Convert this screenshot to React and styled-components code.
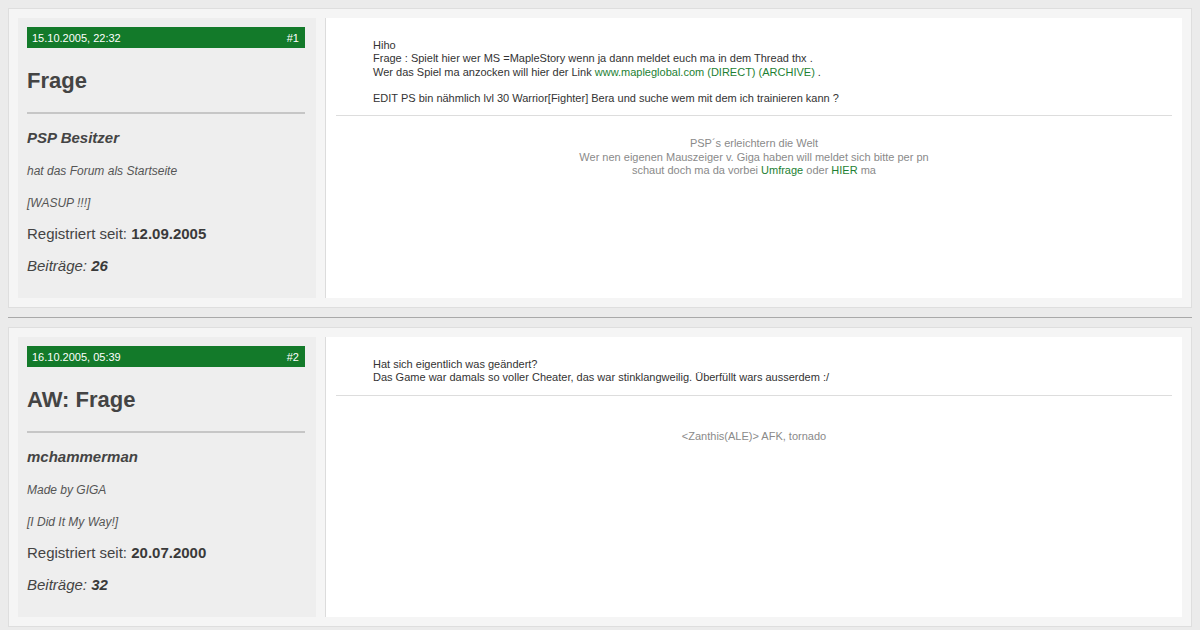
import React from "react";
import styled, { createGlobalStyle } from "styled-components";

const GlobalStyle = createGlobalStyle`
  html, body {
    margin: 0;
    padding: 0;
    background: #ebebeb;
  }
  body {
    font-family: "Liberation Sans", Arial, sans-serif;
    color: #444;
  }
`;

const Page = styled.div`
  padding: 8px;
  display: flex;
  flex-direction: column;
`;

const Divider = styled.div`
  height: 1px;
  background: #a9a9a9;
  margin: 9px 0;
`;

const Post = styled.div`
  display: flex;
  height: 280px;
  padding: 9px;
  background: #f5f5f5;
  border: 1px solid #dedede;
`;

const Sidebar = styled.div`
  width: 278px;
  flex-shrink: 0;
  padding: 9px 11px 9px 9px;
  background: #eeeeee;
`;

const DateBar = styled.div`
  display: flex;
  justify-content: space-between;
  align-items: center;
  height: 21px;
  padding: 0 6px 0 5px;
  background: #137a2a;
  color: #fff;
  font-size: 11px;
`;

const Title = styled.h2`
  margin: 20px 0 0;
  font-size: 22px;
  line-height: 26px;
  font-weight: bold;
  color: #444;
`;

const Rule = styled.div`
  height: 2px;
  margin-top: 18px;
  background: #c6c6c6;
`;

const UserName = styled.div`
  margin-top: 14px;
  height: 20px;
  font-size: 15px;
  line-height: 20px;
  font-weight: bold;
  font-style: italic;
  color: #444;
`;

const SmallLine = styled.div`
  margin-top: ${(p) => p.$gap}px;
  height: 20px;
  font-size: 12px;
  line-height: 20px;
  font-style: italic;
  color: #555;
`;

const InfoLine = styled.div`
  margin-top: ${(p) => p.$gap}px;
  height: 20px;
  font-size: 15px;
  line-height: 20px;
  font-style: ${(p) => (p.$italic ? "italic" : "normal")};
  color: #444;

  b {
    color: #3a3a3a;
  }
`;

const Content = styled.div`
  flex: 1;
  margin-left: 9px;
  padding: 0 10px;
  background: #fff;
  border-left: 1px solid #dcdcdc;
`;

const Message = styled.div`
  padding: 21px 0 0 37px;
  font-size: 11px;
  line-height: 13.3px;
  color: #333;
`;

const ContentRule = styled.div`
  height: 1px;
  margin-top: 10px;
  background: #dddddd;
`;

const Signature = styled.div`
  margin-top: 21px;
  text-align: center;
  font-size: 11px;
  line-height: 13.3px;
  color: #8a8a8a;
`;

const Link = styled.a`
  color: #1d7f33;
  text-decoration: none;
`;

const posts = [
  {
    date: "15.10.2005, 22:32",
    number: "#1",
    title: "Frage",
    user: "PSP Besitzer",
    rank: "hat das Forum als Startseite",
    tag: "[WASUP !!!]",
    registered: "12.09.2005",
    count: "26",
    body: (
      <>
        Hiho
        <br />
        Frage : Spielt hier wer MS =MapleStory wenn ja dann meldet euch ma in dem Thread thx .
        <br />
        Wer das Spiel ma anzocken will hier der Link{" "}
        <Link href="#">www.mapleglobal.com (DIRECT) (ARCHIVE)</Link> .
        <br />
        <br />
        EDIT PS bin nähmlich lvl 30 Warrior[Fighter] Bera und suche wem mit dem ich trainieren kann ?
      </>
    ),
    signature: (
      <>
        PSP´s erleichtern die Welt
        <br />
        Wer nen eigenen Mauszeiger v. Giga haben will meldet sich bitte per pn
        <br />
        schaut doch ma da vorbei <Link href="#">Umfrage</Link> oder{" "}
        <Link href="#">HIER</Link> ma
      </>
    ),
  },
  {
    date: "16.10.2005, 05:39",
    number: "#2",
    title: "AW: Frage",
    user: "mchammerman",
    rank: "Made by GIGA",
    tag: "[I Did It My Way!]",
    registered: "20.07.2000",
    count: "32",
    body: (
      <>
        Hat sich eigentlich was geändert?
        <br />
        Das Game war damals so voller Cheater, das war stinklangweilig. Überfüllt wars ausserdem :/
      </>
    ),
    signature: (
      <>
        <br />
        &lt;Zanthis(ALE)&gt; AFK, tornado
      </>
    ),
  },
];

export default function App() {
  return (
    <>
      <GlobalStyle />
      <Page>
        {posts.map((post, index) => (
          <React.Fragment key={post.number}>
            {index > 0 && <Divider />}
            <Post>
              <Sidebar>
                <DateBar>
                  <span>{post.date}</span>
                  <span>{post.number}</span>
                </DateBar>
                <Title>{post.title}</Title>
                <Rule />
                <UserName>{post.user}</UserName>
                <SmallLine $gap={13}>{post.rank}</SmallLine>
                <SmallLine $gap={12}>{post.tag}</SmallLine>
                <InfoLine $gap={11}>
                  Registriert seit: <b>{post.registered}</b>
                </InfoLine>
                <InfoLine $gap={12} $italic>
                  Beiträge: <b>{post.count}</b>
                </InfoLine>
              </Sidebar>
              <Content>
                <Message>{post.body}</Message>
                <ContentRule />
                <Signature>{post.signature}</Signature>
              </Content>
            </Post>
          </React.Fragment>
        ))}
      </Page>
    </>
  );
}
